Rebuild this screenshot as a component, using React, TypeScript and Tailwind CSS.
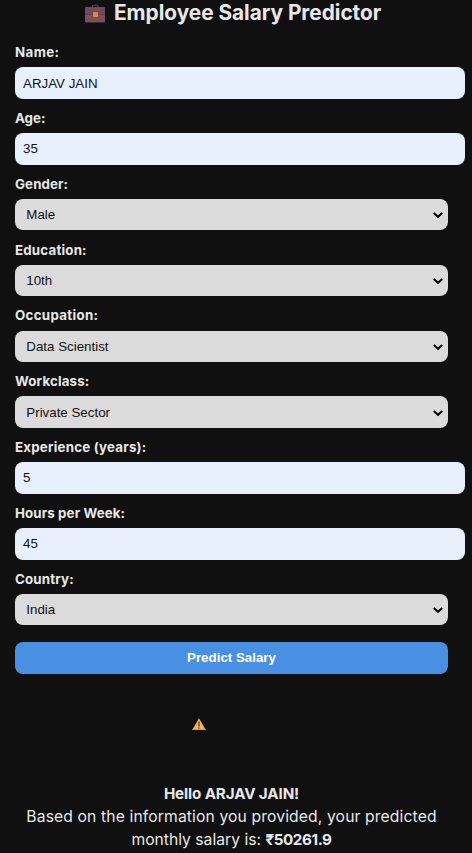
import React from 'react';

type Field = { label: string; value: string; kind: 'input' | 'select'; labelClass: string };

const fields: Field[] = [
  { label: 'Name:', value: 'ARJAV JAIN', kind: 'input', labelClass: 'tracking-[0.4px]' },
  { label: 'Age:', value: '35', kind: 'input', labelClass: 'tracking-[0px]' },
  { label: 'Gender:', value: 'Male', kind: 'select', labelClass: 'tracking-[0.12px]' },
  { label: 'Education:', value: '10th', kind: 'select', labelClass: 'tracking-[0.2px]' },
  { label: 'Occupation:', value: 'Data Scientist', kind: 'select', labelClass: 'tracking-[0.32px]' },
  { label: 'Workclass:', value: 'Private Sector', kind: 'select', labelClass: 'tracking-[0.16px]' },
  { label: 'Experience (years):', value: '5', kind: 'input', labelClass: 'tracking-[0.23px]' },
  { label: 'Hours per Week:', value: '45', kind: 'input', labelClass: 'tracking-[0.12px]' },
  { label: 'Country:', value: 'India', kind: 'select', labelClass: 'tracking-[0.16px]' },
];

function Briefcase() {
  return (
    <svg className="h-[19px] w-[20px] shrink-0" viewBox="0 0 20 19">
      <path d="M7.4 4V2.6Q7.4 1.2 8.6 1.2h3.2Q13 1.2 13 2.6V4" fill="none" stroke="#68423f" strokeWidth="1.1" />
      <rect x="0" y="3" width="20" height="15.2" rx="1" fill="#75485a" />
      <path d="M0 10.5h20v6.7q0 1-1 1H1q-1 0-1-1z" fill="#7d4d60" />
      <path d="M0 10.5h20" stroke="#62394b" strokeWidth=".8" />
      <rect x="8" y="8" width="5" height="5" rx=".8" fill="#d9835f" />
    </svg>
  );
}

function Warning() {
  return (
    <svg className="h-[13px] w-[14px]" viewBox="0 0 14 13">
      <path d="M7 .3 13.8 12H.2z" fill="#fbb24f" />
      <path d="M.8 11 .2 12h13.6l-.6-1z" fill="#e8924a" />
      <path d="M7 3.6v5" stroke="#5b4b45" strokeWidth="1.5" />
      <path d="M7 9.4v1.3" stroke="#5b4b45" strokeWidth="1.5" />
    </svg>
  );
}

function FieldRow({ field }: { field: Field }) {
  return (
    <div className="h-[65.83px]">
      <div className={`flex h-[34.23px] items-center pt-[6px] font-['Inter',sans-serif] text-[13.3px] font-bold whitespace-nowrap text-[#e8e8e8] ${field.labelClass}`}>
        {field.label}
      </div>
      {field.kind === 'input' ? (
        <div className="flex h-[31.6px] w-[450px] items-center rounded-[8px] bg-[#e8f0fe] pt-[1px] pl-[8px] font-['Liberation_Sans',sans-serif] text-[13.33px] text-[#111]">
          {field.value}
        </div>
      ) : (
        <div className="flex h-[31.6px] w-[433px] items-center justify-between rounded-[8px] bg-[#dbdbdb] pt-[0.7px] pr-[4px] pl-[11.3px] font-['Liberation_Sans',sans-serif] text-[13.33px] text-[#111]">
          <span>{field.value}</span>
          <svg className="h-[8px] w-[12px]" viewBox="0 0 12 8" fill="none" stroke="#000" strokeWidth="2">
            <path d="m1.8 2 4.2 3.8L10.200 2" />
          </svg>
        </div>
      )}
    </div>
  );
}

export default function App() {
  return (
    <main className="h-[853px] w-[472px] overflow-hidden bg-[#101010] pl-[15px] font-['Inter',sans-serif] text-[#e8e8e8]">
      <h1 className="flex h-[33px] w-[433px] pl-[70px]">
        <span className="pt-[4px]"><Briefcase /></span>
        <span className="pt-[1px] pl-[9px] text-[20.8px] leading-[24px] font-bold tracking-[-0.02px] whitespace-nowrap">Employee Salary Predictor</span>
      </h1>
      <form>
        {fields.map((field) => <FieldRow key={field.label} field={field} />)}
        <button type="button" className="mt-[16.5px] flex h-[32px] w-[433px] items-center justify-center rounded-[8px] bg-[#4a90e2] font-['Liberation_Sans',sans-serif] text-[13.33px] font-bold text-white">
          Predict Salary
        </button>
      </form>
      <div className="mt-[44px] flex h-[13px] pl-[177px]"><Warning /></div>
      <p className="mt-[51px] w-[433px] text-center text-[15.7px] leading-[23px] whitespace-nowrap">
        <strong className="block text-[15.2px] font-bold tracking-[-0.13px]">Hello ARJAV JAIN!</strong>
        <span className="block tracking-[0.12px]">Based on the information you provided, your predicted</span>
        <span className="block tracking-[0px]">monthly salary is: <strong className="text-[15.2px] font-bold tracking-[-0.4px]">₹50261.9</strong></span>
      </p>
    </main>
  );
}
